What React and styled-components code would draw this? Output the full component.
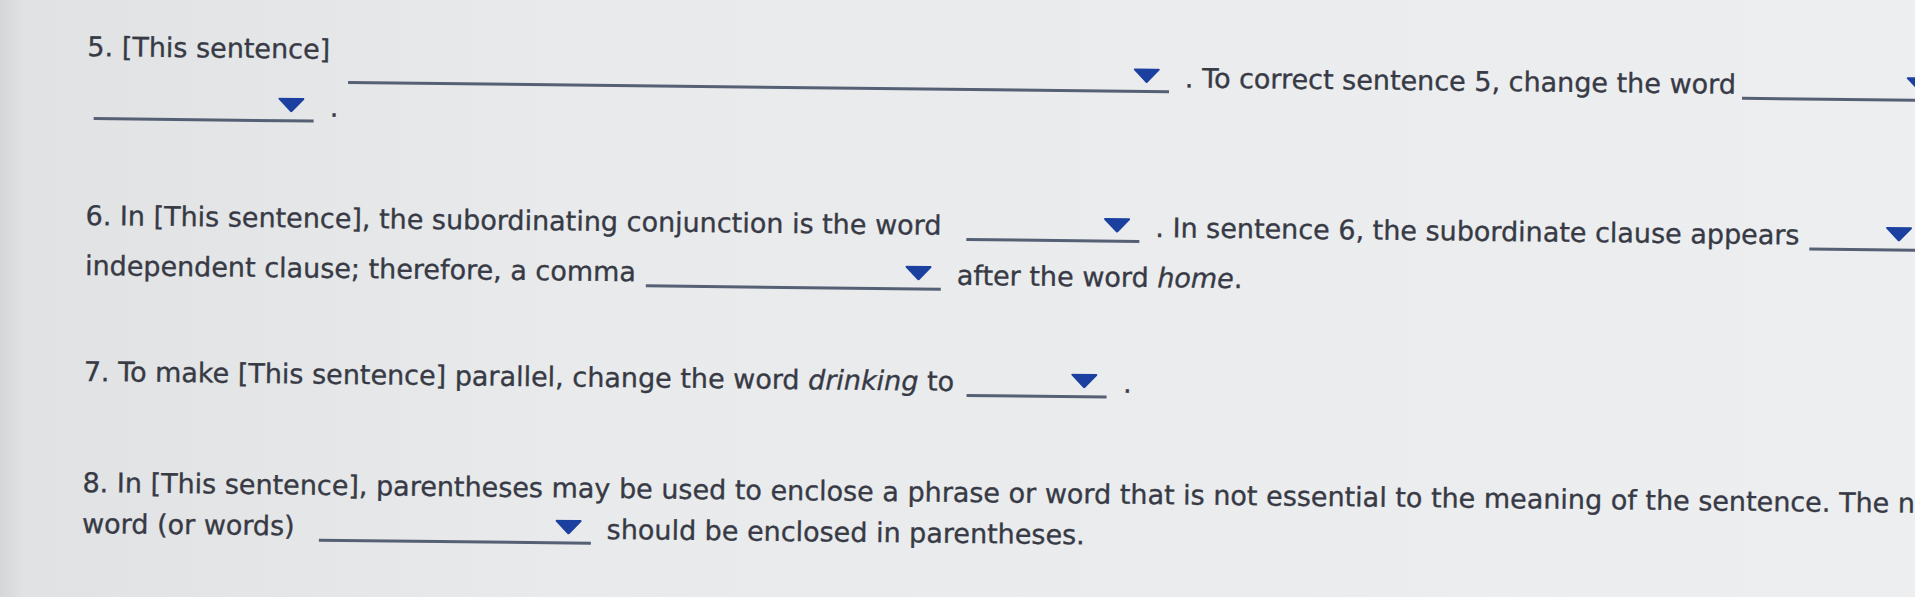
import React from 'react';
import styled, { createGlobalStyle } from 'styled-components';

const GlobalStyle = createGlobalStyle`
    html, body {
        margin: 0;
        padding: 0;
        overflow: hidden;
    }
    body {
        background: #e8eaec;
    }
`;

const Page = styled.div`
    position: relative;
    height: 100vh;
    overflow: hidden;
    background: linear-gradient(90deg, #d4d6d8 0px, #e0e2e4 24px, #e8eaec 30%, #eceef0 100%);
    font-family: "DejaVu Sans", Verdana, sans-serif;
    font-size: 27px;
    color: #373a45;
    -webkit-text-stroke: 0.35px #373a45;
`;

const Sheet = styled.div`
    padding: 24px 0 0 88px;
    transform: rotate(0.65deg);
    transform-origin: 0 0;
`;

const Question = styled.div`
    margin-top: ${p => p.$space ?? 0}px;
`;

const Row = styled.div`
    height: ${p => p.$height ?? 44}px;
    line-height: ${p => Math.min(p.$height ?? 44, 44)}px;
    white-space: nowrap;
`;

const Raised = styled.span`
    vertical-align: 19px;
`;

const Word = styled.em`
    font-style: italic;
`;

const Select = styled.span`
    display: inline-block;
    box-sizing: border-box;
    width: ${p => p.$width}px;
    height: 30px;
    margin: 0 16px 0 ${p => p.$lead ?? 12}px;
    padding: 0 9px 7px 0;
    border-bottom: 3px solid #566074;
    vertical-align: -6px;
`;

const Arrow = styled.svg`
    display: block;
    margin: 5px 0 0 auto;
`;

function Dropdown({ width, lead }) {
    return (
        <Select $width={width} $lead={lead}>
            <Arrow width="27" height="15" viewBox="0 0 27 15">
                <path d="M1.5 1.5 H25.5 L13.5 14 Z" fill="#1c40a0" stroke="#1c40a0" strokeWidth="2" strokeLinejoin="round" />
            </Arrow>
        </Select>
    );
}

export function App() {
    return (
        <Page>
            <GlobalStyle />
            <Sheet>
                <Question>
                    <Row $height={58}>
                        <Raised>5. [This sentence]</Raised>
                        <Dropdown width={821} lead={18} />
                        . To correct sentence 5, change the word
                        <Dropdown width={200} lead={6} />
                        to
                    </Row>
                    <Row>
                        <Dropdown width={220} lead={7} />
                        .
                    </Row>
                </Question>
                <Question $space={67}>
                    <Row $height={50}>
                        6. In [This sentence], the subordinating conjunction is the word
                        <Dropdown width={173} lead={25} />
                        . In sentence 6, the subordinate clause appears
                        <Dropdown width={112} lead={10} />
                        the
                    </Row>
                    <Row>
                        independent clause; therefore, a comma
                        <Dropdown width={295} lead={10} />
                        after the word <Word>home</Word>.
                    </Row>
                </Question>
                <Question $space={62}>
                    <Row>
                        7. To make [This sentence] parallel, change the word <Word>drinking</Word> to
                        <Dropdown width={140} lead={13} />
                        .
                    </Row>
                </Question>
                <Question $space={70}>
                    <Row $height={38}>
                        8. In [This sentence], parentheses may be used to enclose a phrase or word that is not essential to the meaning of the sentence. The nonessential
                    </Row>
                    <Row>
                        word (or words)
                        <Dropdown width={272} lead={24} />
                        should be enclosed in parentheses.
                    </Row>
                </Question>
            </Sheet>
        </Page>
    );
}

export default App;
